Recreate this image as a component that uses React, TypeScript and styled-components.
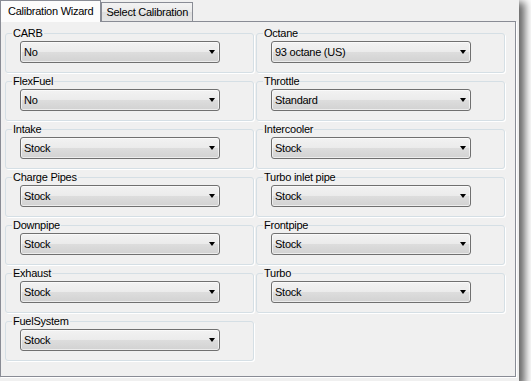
import React from "react";
import styled, { createGlobalStyle } from "styled-components";

const GlobalStyle = createGlobalStyle`
  body {
    margin: 0;
    background: #ffffff;
    font-family: "Liberation Sans", Arial, sans-serif;
    font-size: 11px;
    color: #000000;
  }
`;

const Window = styled.div`
  width: 519px;
  height: 381px;
  background: #f0f0f0;
  box-shadow: 4px 4px 8px 2px rgba(0, 0, 0, 0.6);
`;

const TabStrip = styled.div`
  display: flex;
  align-items: flex-end;
  height: 21px;
`;

const Tab = styled.div<{ $active?: boolean }>`
  position: relative;
  z-index: ${(p) => (p.$active ? 1 : 0)};
  box-sizing: border-box;
  height: ${(p) => (p.$active ? "22px" : "19px")};
  margin-bottom: ${(p) => (p.$active ? "-1px" : "0")};
  padding: ${(p) => (p.$active ? "0 7px 1px 7px" : "0 4px 0 4px")};
  display: flex;
  align-items: center;
  border: 1px solid #898c95;
  border-bottom: none;
  background: ${(p) =>
    p.$active
      ? "#fcfcfc"
      : "linear-gradient(#f3f3f3 0%, #ebebeb 50%, #dedede 51%, #e6e6e6 100%)"};
  letter-spacing: -0.25px;
  white-space: nowrap;
`;

const TabPage = styled.div`
  box-sizing: border-box;
  width: 516px;
  height: 356px;
  border: 1px solid #898c95;
  box-shadow: 1px 1px 0 #ffffff;
  padding: 4px 0 0 4px;
`;

const Grid = styled.div`
  display: grid;
  grid-template-columns: 249px 249px;
  grid-auto-rows: 47px;
  column-gap: 2px;
  row-gap: 1px;
`;

const Group = styled.fieldset`
  box-sizing: border-box;
  margin: 0;
  min-width: 0;
  height: 47px;
  padding: 1px 0 9px 6px;
  border: 1px solid #d5dfe5;
  border-radius: 3px;
  box-shadow: 1px 1px 0 #ffffff;
`;

const Legend = styled.legend`
  padding: 0 1px;
  margin: 0;
  line-height: 14px;
  letter-spacing: -0.25px;
`;

const Combo = styled.div`
  box-sizing: border-box;
  width: 200px;
  height: 22px;
  margin-left: 8px;
  padding: 0 4px 0 3px;
  display: flex;
  align-items: center;
  border: 1px solid #707070;
  border-radius: 3px;
  background: linear-gradient(#f2f2f2 0%, #ebebeb 50%, #dddddd 51%, #d2d2d2 100%);
  box-shadow: inset 0 0 0 1px rgba(255, 255, 255, 0.6);
  letter-spacing: -0.25px;
`;

const Arrow = styled.span`
  margin-left: auto;
  width: 0;
  height: 0;
  border-left: 3.5px solid transparent;
  border-right: 3.5px solid transparent;
  border-top: 4px solid #000000;
`;

const fields: [string, string][] = [
  ["CARB", "No"],
  ["Octane", "93 octane (US)"],
  ["FlexFuel", "No"],
  ["Throttle", "Standard"],
  ["Intake", "Stock"],
  ["Intercooler", "Stock"],
  ["Charge Pipes", "Stock"],
  ["Turbo inlet pipe", "Stock"],
  ["Downpipe", "Stock"],
  ["Frontpipe", "Stock"],
  ["Exhaust", "Stock"],
  ["Turbo", "Stock"],
  ["FuelSystem", "Stock"],
];

const App = () => {
  return (
    <>
      <GlobalStyle />
      <Window>
        <TabStrip>
          <Tab $active>Calibration Wizard</Tab>
          <Tab>Select Calibration</Tab>
        </TabStrip>
        <TabPage>
          <Grid>
            {fields.map(([label, value]) => (
              <Group key={label}>
                <Legend>{label}</Legend>
                <Combo>
                  <span>{value}</span>
                  <Arrow />
                </Combo>
              </Group>
            ))}
          </Grid>
        </TabPage>
      </Window>
    </>
  );
};

export default App;
